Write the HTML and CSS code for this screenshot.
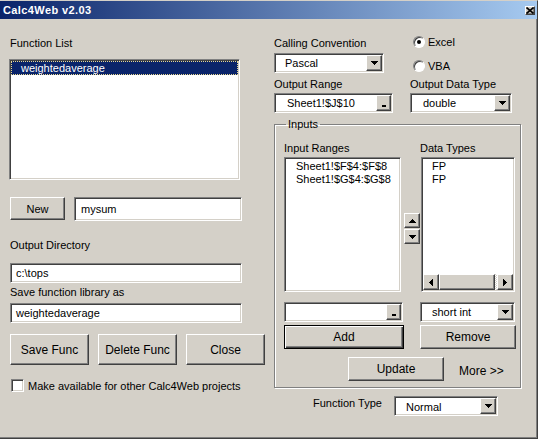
FILE: index.html
```html
<!DOCTYPE html>
<html lang="en">
<head>
    <meta charset="UTF-8">
    <title>Calc4Web v2.03</title>
    <link rel="stylesheet" href="styles.css">
</head>
<body>
    <div class="window">
        <div class="titlebar">
            <span class="title">Calc4Web v2.03</span>
            <button class="btn close-btn">
                <svg width="8" height="7" viewBox="0 0 8 7"><path d="M0.5 0.5 7.5 6.5M7.5 0.5 0.5 6.5" stroke="#000" stroke-width="1.6"/></svg>
            </button>
        </div>
        <div class="content">
            <div class="left">
                <div class="label label-first">Function List</div>
                <div class="listbox sunken func-list">
                    <div class="item selected">weightedaverage</div>
                </div>
                <div class="new-row">
                    <button class="btn new-btn">New</button>
                    <div class="field sunken new-name">mysum</div>
                </div>
                <div class="label dir-label">Output Directory</div>
                <div class="field sunken dir-field">c:\tops</div>
                <div class="label lib-label">Save function library as</div>
                <div class="field sunken lib-field">weightedaverage</div>
                <div class="action-row">
                    <button class="btn action-btn">Save Func</button>
                    <button class="btn action-btn">Delete Func</button>
                    <button class="btn action-btn">Close</button>
                </div>
                <div class="check-row">
                    <span class="checkbox sunken"></span>
                    <span>Make available for other Calc4Web projects</span>
                </div>
            </div>

            <div class="right">
                <div class="top-grid">
                    <div class="col-a">
                        <div class="label">Calling Convention</div>
                        <div class="select sunken conv-select">
                            <span>Pascal</span>
                            <span class="btn drop-btn"><svg width="7" height="4" viewBox="0 0 7 4"><path d="M0 0h7v1h-1v1h-1v1h-1v1h-1v-1h-1v-1h-1v-1h-1z"/></svg></span>
                        </div>
                        <div class="label range-label">Output Range</div>
                        <div class="select sunken range-field">
                            <span>Sheet1!$J$10</span>
                            <span class="btn browse-btn"><i class="mark"></i></span>
                        </div>
                    </div>
                    <div class="col-b">
                        <div class="radio-row radio-first"><span class="radio checked"></span>Excel</div>
                        <div class="radio-row radio-second"><span class="radio"></span>VBA</div>
                        <div class="label type-label">Output Data Type</div>
                        <div class="select sunken out-type">
                            <span>double</span>
                            <span class="btn drop-btn"><svg width="7" height="4" viewBox="0 0 7 4"><path d="M0 0h7v1h-1v1h-1v1h-1v1h-1v-1h-1v-1h-1v-1h-1z"/></svg></span>
                        </div>
                    </div>
                </div>

                <fieldset class="group">
                    <legend>Inputs</legend>
                    <div class="io-grid">
                        <div class="label">Input Ranges</div>
                        <div></div>
                        <div class="label">Data Types</div>

                        <div class="listbox sunken range-list">
                            <div class="line">Sheet1!$F$4:$F$8</div>
                            <div class="line">Sheet1!$G$4:$G$8</div>
                        </div>
                        <div class="arrows">
                            <span class="btn arrow-btn"><svg width="7" height="4" viewBox="0 0 7 4"><path d="M3 0h1v1h1v1h1v1h1v1h-7v-1h1v-1h1v-1h1z"/></svg></span>
                            <span class="btn arrow-btn"><svg width="7" height="4" viewBox="0 0 7 4"><path d="M0 0h7v1h-1v1h-1v1h-1v1h-1v-1h-1v-1h-1v-1h-1z"/></svg></span>
                        </div>
                        <div class="listbox sunken type-list">
                            <div class="lines">
                                <div class="line">FP</div>
                                <div class="line">FP</div>
                            </div>
                            <div class="scrollbar">
                                <span class="btn sb-btn"><svg width="4" height="7" viewBox="0 0 4 7"><path d="M3 0h1v7h-1v-1h-1v-1h-1v-1h-1v-1h1v-1h1v-1h1z"/></svg></span>
                                <span class="btn sb-thumb"></span>
                                <span class="sb-track"></span>
                                <span class="btn sb-btn"><svg width="4" height="7" viewBox="0 0 4 7"><path d="M0 0h1v1h1v1h1v1h1v1h-1v1h-1v1h-1v1h-1z"/></svg></span>
                            </div>
                        </div>

                        <div class="select sunken range-combo">
                            <span></span>
                            <span class="btn browse-btn"><i class="mark"></i></span>
                        </div>
                        <div></div>
                        <div class="select sunken int-select">
                            <span>short int</span>
                            <span class="btn drop-btn"><svg width="7" height="4" viewBox="0 0 7 4"><path d="M0 0h7v1h-1v1h-1v1h-1v1h-1v-1h-1v-1h-1v-1h-1z"/></svg></span>
                        </div>
                    </div>
                    <div class="io-buttons">
                        <button class="btn btn-default add-btn">Add</button>
                        <button class="btn remove-btn">Remove</button>
                    </div>
                    <div class="update-row">
                        <button class="btn update-btn">Update</button>
                        <span class="more">More &gt;&gt;</span>
                    </div>
                </fieldset>

                <div class="type-row">
                    <span class="label func-type-label">Function Type</span>
                    <div class="select sunken func-type">
                        <span>Normal</span>
                        <span class="btn drop-btn"><svg width="7" height="4" viewBox="0 0 7 4"><path d="M0 0h7v1h-1v1h-1v1h-1v1h-1v-1h-1v-1h-1v-1h-1z"/></svg></span>
                    </div>
                </div>
            </div>
        </div>
    </div>
</body>
</html>
```

FILE: styles.css
```css
* {
    box-sizing: border-box;
}
body {
    margin: 0;
    font-family: "Liberation Sans", Arial, sans-serif;
    font-size: 11px;
    color: #000;
    background: #fff;
}
.window {
    width: 538px;
    height: 439px;
    background: #d4d0c8;
    border-top: 1px solid #d4d0c8;
    border-right: 1px solid #404040;
    border-bottom: 1px solid #404040;
    box-shadow: inset -1px -1px #808080;
    display: flex;
    flex-direction: column;
}
.titlebar {
    height: 18px;
    background: linear-gradient(to right, #0a246a, #a6caf0);
    display: flex;
    align-items: center;
    justify-content: space-between;
    padding: 0 2px 0 3px;
}
.title {
    color: #fff;
    font-weight: bold;
    letter-spacing: 0.4px;
}
.content {
    display: flex;
    flex: 1;
}

/* generic win2000 bits */
.label {
    height: 13px;
    line-height: 13px;
    white-space: nowrap;
}
.sunken {
    background: #fff;
    border: 1px solid;
    border-color: #808080 #fff #fff #808080;
    box-shadow: inset 1px 1px #404040, inset -1px -1px #d4d0c8;
}
.btn {
    font: inherit;
    color: #000;
    padding: 0;
    background: #d4d0c8;
    border: 1px solid;
    border-color: #fff #404040 #404040 #fff;
    box-shadow: inset -1px -1px #808080;
    display: flex;
    align-items: center;
    justify-content: center;
}
.btn-default {
    border: 1px solid #000;
    box-shadow: inset 1px 1px #fff, inset -1px -1px #404040, inset -2px -2px #808080;
}
.field {
    height: 20px;
    line-height: 18px;
    padding-left: 5px;
}
.select {
    height: 20px;
    padding: 1px;
    display: flex;
    align-items: center;
    justify-content: space-between;
}
.select > span:first-child {
    padding-left: 9px;
}
.drop-btn {
    width: 16px;
    height: 16px;
}
.browse-btn {
    width: 15px;
    height: 16px;
    align-items: flex-end;
    padding-bottom: 3px;
}
.mark {
    display: block;
    width: 4px;
    height: 2px;
    background: #000;
}

/* left column */
.left {
    width: 274px;
    padding-left: 10px;
    display: flex;
    flex-direction: column;
    align-items: flex-start;
}
.label-first {
    margin-top: 18px;
}
.listbox {
    padding: 1px;
}
.func-list {
    margin-top: 9px;
    margin-left: -1px;
    width: 231px;
    height: 121px;
}
.item {
    height: 14px;
    line-height: 14px;
    padding-left: 10px;
}
.selected {
    background: #0a246a;
    color: #fff;
    outline: 1px dotted #e8d890;
    outline-offset: -1px;
}
.new-row {
    margin-top: 17px;
    display: flex;
    gap: 9px;
}
.new-btn {
    width: 55px;
    height: 23px;
}
.new-name {
    width: 168px;
    height: 24px;
    line-height: 22px;
    padding-left: 6px;
}
.dir-label {
    margin-top: 18px;
}
.dir-field {
    margin-top: 11px;
    width: 232px;
}
.lib-label {
    margin-top: 3px;
}
.lib-field {
    margin-top: 4px;
    width: 232px;
}
.action-row {
    margin-top: 11px;
    display: flex;
    gap: 9px;
}
.action-btn {
    width: 79px;
    height: 31px;
    font-size: 12px;
}
.check-row {
    margin-top: 14px;
    margin-left: 1px;
    display: flex;
    align-items: center;
    gap: 4px;
    white-space: nowrap;
}
.checkbox {
    width: 13px;
    height: 13px;
}

/* right column */
.right {
    flex: 1;
    padding-top: 18px;
}
.top-grid {
    display: flex;
}
.col-a {
    width: 136px;
}
.conv-select {
    margin-top: 3px;
    width: 110px;
}
.range-label {
    margin-top: 5px;
}
.range-field {
    margin-top: 2px;
    width: 119px;
}
.range-field > span:first-child {
    padding-left: 11px;
}
.col-b {
    padding-left: 3px;
}
.radio-row {
    height: 13px;
    display: flex;
    align-items: center;
    gap: 3px;
}
.radio-first {
    margin-top: -2px;
}
.radio-second {
    margin-top: 11px;
}
.radio {
    position: relative;
    width: 12px;
    height: 12px;
    border-radius: 50%;
    background: #fff;
    border: 1px solid;
    border-color: #808080 #fff #fff #808080;
    box-shadow: inset 1px 1px #404040;
}
.radio.checked::after {
    content: "";
    position: absolute;
    left: 3px;
    top: 3px;
    width: 4px;
    height: 4px;
    border-radius: 50%;
    background: #000;
}
.type-label {
    margin-top: 6px;
    margin-left: -3px;
}
.out-type {
    margin-top: 2px;
    margin-left: -3px;
    width: 102px;
}
.out-type > span:first-child {
    padding-left: 11px;
}

/* inputs group */
.group {
    margin: 5px 0 0;
    width: 247px;
    padding: 0 4px 6px 9px;
    border: 1px solid #808080;
    box-shadow: inset 1px 1px #fff, 1px 1px #fff;
}
.group legend {
    padding: 0 2px;
    margin-left: 2px;
    height: 13px;
    line-height: 13px;
}
.io-grid {
    margin-top: 11px;
    display: grid;
    grid-template-columns: 119px 17px 96px;
}
.range-list {
    margin-top: 2px;
    width: 117px;
    height: 135px;
    padding: 2px 1px 1px 11px;
}
.line {
    height: 13px;
    line-height: 13px;
    white-space: nowrap;
}
.arrows {
    margin-top: 58px;
    margin-left: 1px;
    display: flex;
    flex-direction: column;
    gap: 1px;
}
.arrow-btn {
    width: 16px;
    height: 15px;
}
.type-list {
    margin-top: 2px;
    margin-left: 1px;
    width: 94px;
    height: 135px;
    display: flex;
    flex-direction: column;
}
.lines {
    flex: 1;
    padding: 1px 0 0 9px;
}
.scrollbar {
    height: 16px;
    display: flex;
}
.sb-btn {
    width: 16px;
    height: 16px;
}
.sb-thumb {
    width: 56px;
}
.sb-track {
    flex: 1;
    background: repeating-conic-gradient(#fff 0 25%, #d4d0c8 0 50%) 0 0 / 2px 2px;
}
.range-combo {
    margin-top: 10px;
    width: 119px;
}
.int-select {
    margin-top: 10px;
    width: 95px;
}
.int-select > span:first-child {
    padding-left: 10px;
}
.io-buttons {
    margin-top: 3px;
    display: flex;
}
.add-btn {
    width: 120px;
    height: 24px;
    font-size: 12px;
}
.remove-btn {
    margin-left: 16px;
    width: 96px;
    height: 24px;
    font-size: 12px;
}
.update-row {
    margin-top: 8px;
    padding-left: 64px;
    display: flex;
    align-items: flex-start;
}
.update-btn {
    width: 96px;
    height: 24px;
    font-size: 12px;
}
.more {
    margin-left: 15px;
    margin-top: 8px;
    line-height: 13px;
    font-size: 12px;
}

/* function type */
.type-row {
    margin-top: 8px;
    padding-left: 39px;
    display: flex;
    align-items: center;
}
.func-type-label {
    width: 81px;
    margin-top: -6px;
}
.func-type {
    width: 104px;
}
.func-type > span:first-child {
    padding-left: 10px;
    padding-top: 2px;
}
```
